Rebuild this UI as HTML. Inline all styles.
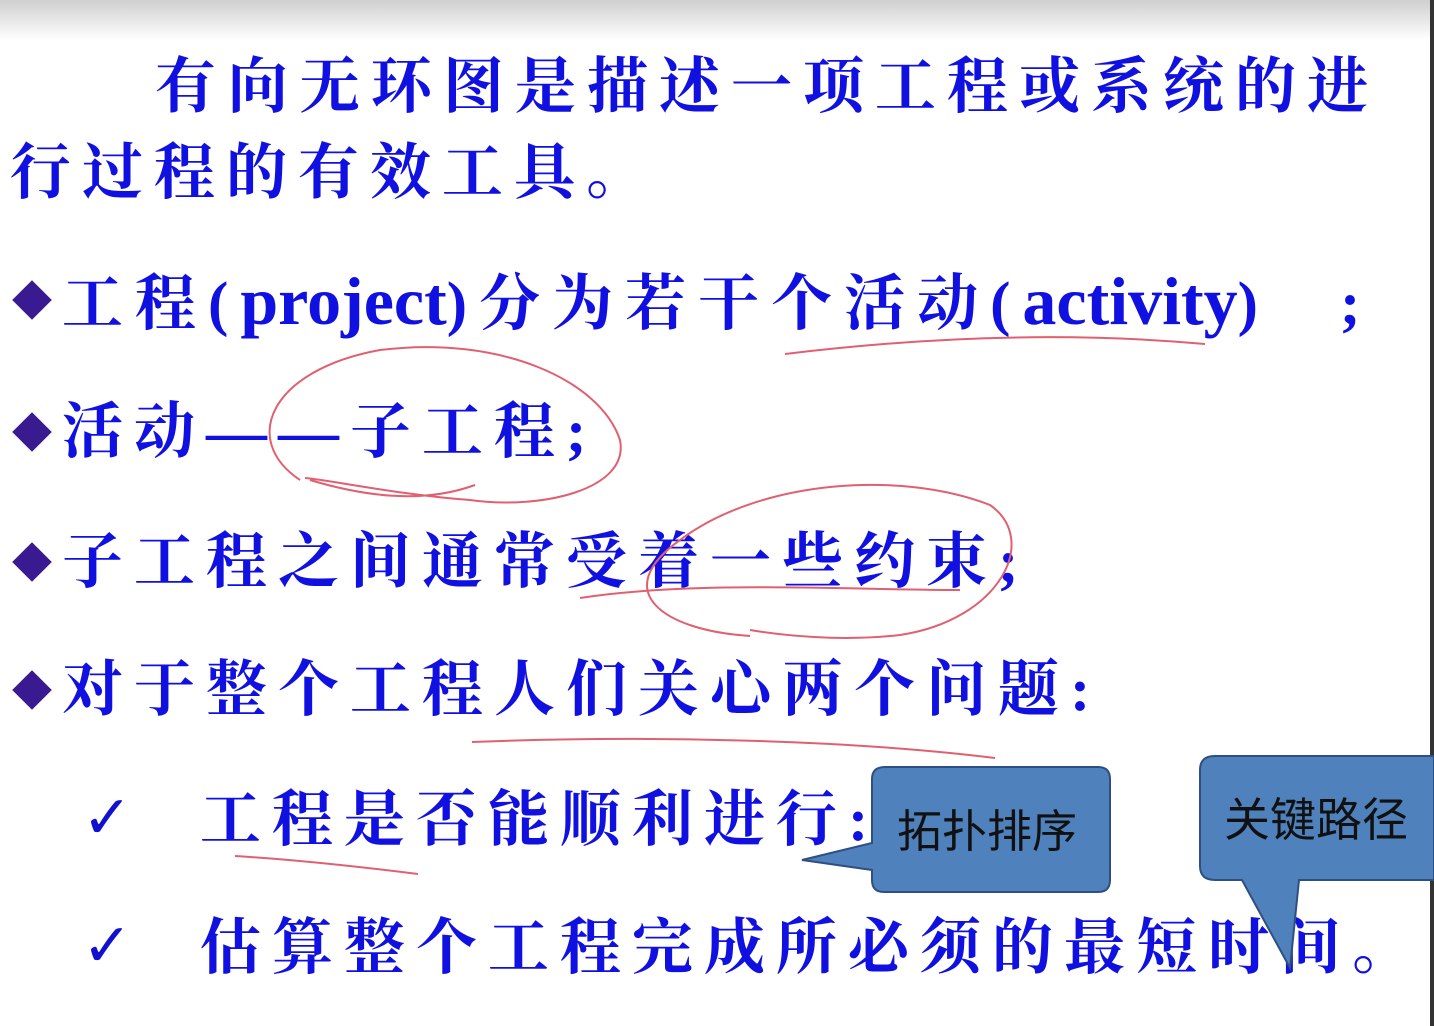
<!DOCTYPE html>
<html><head><meta charset="utf-8"><style>
html,body{margin:0;padding:0}
body{width:1434px;height:1026px;position:relative;overflow:hidden;background:#fff;font-family:"Liberation Serif","Noto Serif CJK SC",serif;}
.top{position:absolute;left:0;top:0;width:1434px;height:40px;background:linear-gradient(#cfcfcf,#fff);}
.t{position:absolute;color:#1010e0;font-size:61px;font-weight:bold;line-height:62px;letter-spacing:11px;white-space:nowrap;}
.l{font-family:'Liberation Serif';letter-spacing:0;font-size:68px}
.d{position:absolute;width:28px;height:28px;background:#3a1a90;transform:rotate(45deg);}
.ck{position:absolute;color:#1010d0;font-size:60px;line-height:60px;font-weight:bold;font-family:"DejaVu Sans",sans-serif;}
.rb{position:absolute;right:0;top:0;width:4px;height:1026px;background:#333;}
</style></head><body>
<div class="top"></div>
<div class="rb"></div>
<div class="t" style="left:155px;top:57px">有向无环图是描述一项工程或系统的进</div>
<div class="t" style="left:10px;top:143px">行过程的有效工具。</div>

<div class="d" style="left:18px;top:286px"></div>
<div class="t" style="left:62px;top:270px;letter-spacing:12px">工程(<span class="l">project</span>)分为若干个活动(<span class="l">activity</span>)<span style="display:inline-block;width:70px"></span>;</div>

<div class="d" style="left:18px;top:418px"></div>
<div class="t" style="left:62px;top:402px">活动——子工程;</div>

<div class="d" style="left:18px;top:548px"></div>
<div class="t" style="left:62px;top:532px">子工程之间通常受着一些约束;</div>

<div class="d" style="left:18px;top:676px"></div>
<div class="t" style="left:62px;top:660px">对于整个工程人们关心两个问题:</div>

<div class="ck" style="left:82px;top:788px">✓</div>
<div class="t" style="left:200px;top:790px">工程是否能顺利进行:</div>
<div class="ck" style="left:82px;top:916px">✓</div>
<div class="t" style="left:200px;top:918px">估算整个工程完成所必须的最短时间。</div>

<svg style="position:absolute;left:0;top:0" width="1434" height="1026">
<g fill="none" stroke="#e06070" stroke-width="2">
<path d="M785 354 C900 340 1050 330 1205 344"/>
<path d="M300 480 C240 440 270 370 380 350 C500 335 600 380 620 440 C630 490 540 510 470 500 C400 495 330 480 305 478"/>
<path d="M310 480 C360 495 420 505 475 485"/>
<path d="M580 598 C700 580 850 590 960 590"/>
<path d="M750 636 C660 630 610 590 680 540 C760 480 900 470 990 505 C1040 540 1000 620 900 635 C840 642 780 635 750 630"/>
<path d="M472 742 C650 735 850 740 995 758"/>
<path d="M235 856 C300 860 370 868 418 874"/>
</g>
<path d="M885 767 H1098 Q1110 767 1110 779 V880 Q1110 892 1098 892 H884 Q872 892 872 880 V870 L802 860 L872 843 V779 Q872 767 885 767 Z" fill="#4f81bd" stroke="#2f4f80" stroke-width="2"/>
<path d="M1215 756 H1434 V880 H1299 L1290 968 L1242 880 H1215 Q1200 880 1200 866 V770 Q1200 756 1215 756 Z" fill="#4f81bd" stroke="#2f4f80" stroke-width="2"/>
<text x="897" y="847" font-family="'Noto Sans CJK SC',sans-serif" font-size="45" fill="#111">拓扑排序</text>
<text x="1224" y="836" font-family="'Noto Sans CJK SC',sans-serif" font-size="46" fill="#111">关键路径</text>
</svg>
</body></html>
